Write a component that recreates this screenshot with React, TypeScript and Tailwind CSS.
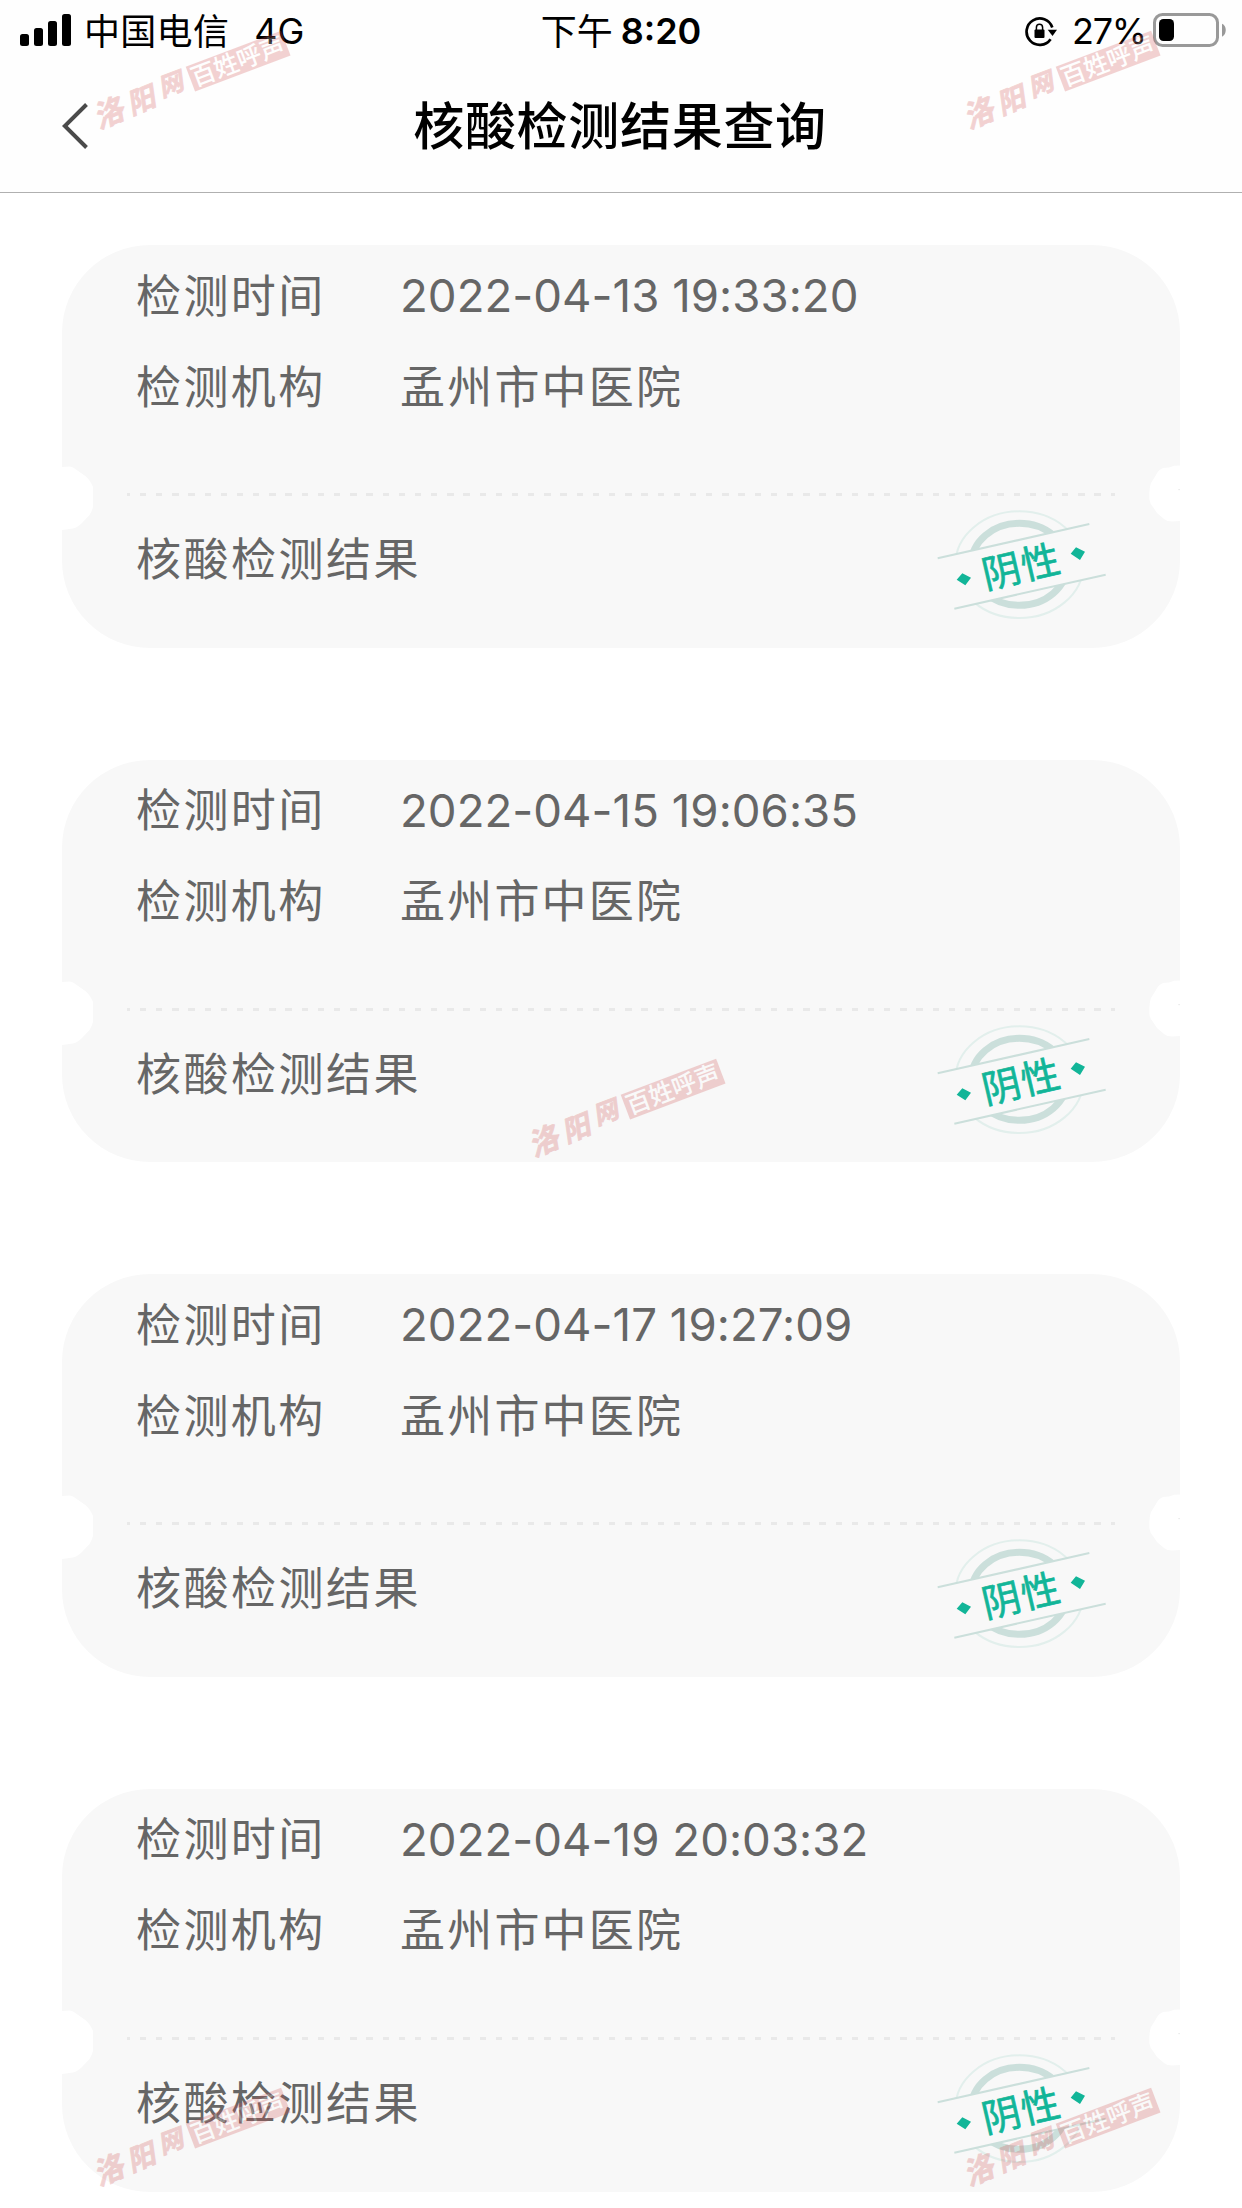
type Result = { time: string; org: string };

const RESULTS: Result[] = [
  { time: "2022-04-13 19:33:20", org: "孟州市中医院" },
  { time: "2022-04-15 19:06:35", org: "孟州市中医院" },
  { time: "2022-04-17 19:27:09", org: "孟州市中医院" },
  { time: "2022-04-19 20:03:32", org: "孟州市中医院" },
];

function StatusBar() {
  return (
    <div className="grid h-[64px] grid-cols-3 text-[36px] leading-[62px] text-black">
      <div className="flex pl-5">
        <svg className="mt-[14px] h-8 w-[51px]" viewBox="0 0 51 32">
          <rect x="0" y="20" width="9" height="12" rx="2.5" />
          <rect x="14" y="14" width="9" height="18" rx="2.5" />
          <rect x="28" y="7" width="9" height="25" rx="2.5" />
          <rect x="42" y="0" width="9" height="32" rx="2.5" />
        </svg>
        <span className="ml-[13px] pt-px tracking-[0.3px]">中国电信</span>
        <span className="ml-[25px]">4G</span>
      </div>
      <div className="flex justify-center">
        <span className="pt-px">下午</span>
        <span className="ml-[8px] font-semibold">8:20</span>
      </div>
      <div className="flex justify-end pr-4">
        <svg className="mt-[16px] h-[31px] w-[33px]" viewBox="0 0 33 31">
          <path d="M25.6 23.2A13.2 13.2 0 1 1 27.3 11.5" fill="none" stroke="black" strokeWidth="2.7" />
          <path d="M22.7 13.7h9.3l-4.5 6.3z" />
          <rect x="9.5" y="13.6" width="10" height="8.4" rx="1" />
          <path d="M11.4 14v-2.6a3.1 3.1 0 0 1 6.2 0V14" fill="none" stroke="black" strokeWidth="1.5" />
        </svg>
        <span className="ml-[14px] tracking-[-1.2px]">27%</span>
        <svg className="mt-[13px] ml-[7px] h-[34px] w-[73px]" viewBox="0 0 73 34">
          <rect x="1.5" y="1.5" width="63" height="31" rx="8" fill="none" stroke="#999" strokeWidth="3" />
          <rect x="6" y="6" width="15" height="22" rx="4.5" />
          <path d="M69 10.700c5 2 5 10.600 0 13z" fill="#999" />
        </svg>
      </div>
    </div>
  );
}

function Header() {
  return (
    <header className="h-[193px] border-b border-[#b0b0b0] bg-[#fefefe]">
      <StatusBar />
      <div className="grid h-[124px] grid-cols-[1fr_auto_1fr] items-center">
        <svg className="ml-[62px] h-[46px] w-[26px]" viewBox="0 0 26 46">
          <path d="M24.500 1.500L2.800 23L24.500 44.500" fill="none" stroke="#4a4a4a" strokeWidth="4" />
        </svg>
        <h1 className="mr-[2px] text-[51px] leading-none font-medium tracking-[0.7px] text-black">核酸检测结果查询</h1>
      </div>
    </header>
  );
}

function Stamp() {
  return (
    <svg className="h-[115px] w-[172px]" viewBox="0 0 516 345">
      <g transform="translate(-102 -170)">
        <ellipse cx="358" cy="343" rx="192" ry="160" fill="none" stroke="#e2efec" strokeWidth="6" />
        <ellipse cx="358" cy="342" rx="144" ry="123" fill="none" stroke="#cbdfdb" strokeWidth="21" />
        <path d="M113 324L568 221L617 373L163 475z" fill="#f8f8f8" />
        <path d="M113 324L568 221M163 475L617 373" stroke="#cbdfdb" strokeWidth="6" />
        <path d="M170 388L187 369L213 382L196 405zM512 310L528 291L555 304L540 329z" fill="#12b598" />
        <text
          x="364"
          y="391"
          textAnchor="middle"
          transform="rotate(-13 364 350)"
          fill="#12b598"
          stroke="#12b598"
          strokeWidth="2"
          className="text-[116px] tracking-[3px]"
        >
          阴性
        </text>
      </g>
    </svg>
  );
}

function Row({ label, value }: { label: string; value: string }) {
  return (
    <div className="flex h-[91px] items-center">
      <span className="w-[264px] tracking-[2.4px]">{label}</span>
      <span className="tracking-[2.200px]">{value}</span>
    </div>
  );
}

function TimeRow({ label, value }: { label: string; value: string }) {
  return (
    <div className="flex h-[91px] items-center">
      <span className="w-[264px] tracking-[2.4px]">{label}</span>
      <span className="-mt-px text-[45.6px] tracking-[0.030px]">{value}</span>
    </div>
  );
}

function ResultCard({ result }: { result: Result }) {
  return (
    <section className="relative h-[402.67px] rounded-[88px] bg-[#f8f8f8] pt-[6px] text-[45px] leading-[60px] text-[#666]">
      <div className="pl-[74px]">
        <TimeRow label="检测时间" value={result.time} />
        <Row label="检测机构" value={result.org} />
      </div>
      <div className="mt-[60px] mr-[65px] ml-[65px] h-[3px] bg-[repeating-linear-gradient(90deg,#e9e9e9_0_3px,transparent_3px_12.8px,#e9e9e9_12.8px_16.18px)]" />
      <div className="flex pr-[74px] pl-[74px]">
        <span className="mt-[34px] tracking-[2.5px]">核酸检测结果</span>
        <div className="mt-[11px] ml-auto">
          <Stamp />
        </div>
      </div>
      {/* ticket notches */}
      <svg className="absolute top-[220px] left-0 h-[66px] w-8" viewBox="0 0 32 66">
        <path d="M-1 2L8 1.500Q11 2 14 4.500L24 11.500Q28 15 31 22V42Q30 46 27.500 50L19 59Q14 63 11 63.500L-1 65z" fill="white" />
      </svg>
      <svg className="absolute top-[218px] right-0 h-[60px] w-8" viewBox="0 0 32 60">
        <path d="M33 2.500L26 2.700L21 4.500L15 5Q10 7 8 12L3 20Q1 25 1.300 36Q2 41 5 44L9 50L16 56Q19 58.500 24 58.500L33 58z" fill="white" />
        <rect x="30.500" y="26" width="1.200" height="1.200" fill="#e4e4e4" />
      </svg>
    </section>
  );
}

function Watermark({ className }: { className: string }) {
  return (
    <svg className={`pointer-events-none absolute h-[110px] w-[210px] opacity-25 ${className}`} viewBox="90 25 210 110">
      <g fill="#cf4f4f" stroke="#cf4f4f" strokeWidth="0.8" strokeLinejoin="round" className="font-bold" textAnchor="middle">
        <text transform="translate(111 113) rotate(-24) skewX(-14)" y="10" fontSize="30">洛</text>
        <text transform="translate(143 100) rotate(-22) skewX(-14)" y="9.500" fontSize="28">阳</text>
        <text transform="translate(172.500 84) rotate(-21) skewX(-14)" y="8.500" fontSize="25">网</text>
      </g>
      <g transform="translate(185.700 66.700) rotate(-20.700)">
        <rect width="102" height="26.600" fill="#cf4f4f" />
        <text x="1.500" y="22" fontSize="24.500" fill="white" className="font-medium">百姓呼声</text>
      </g>
    </svg>
  );
}

export default function App() {
  return (
    <div className="relative h-[2208px] w-[1242px] overflow-hidden bg-white font-['Inter','Noto_Sans_CJK_SC',sans-serif]">
      <Header />
      <main className="flex flex-col gap-[112px] pt-[52px] pr-[62px] pl-[62px]">
        {RESULTS.map((r) => (
          <ResultCard key={r.time} result={r} />
        ))}
      </main>
      <Watermark className="top-[25px] left-[90px]" />
      <Watermark className="top-[25px] left-[960px]" />
      <Watermark className="top-[1052.600px] left-[525.300px]" />
      <Watermark className="top-[2082.300px] left-[90px]" />
      <Watermark className="top-[2082.300px] left-[960px]" />
    </div>
  );
}
